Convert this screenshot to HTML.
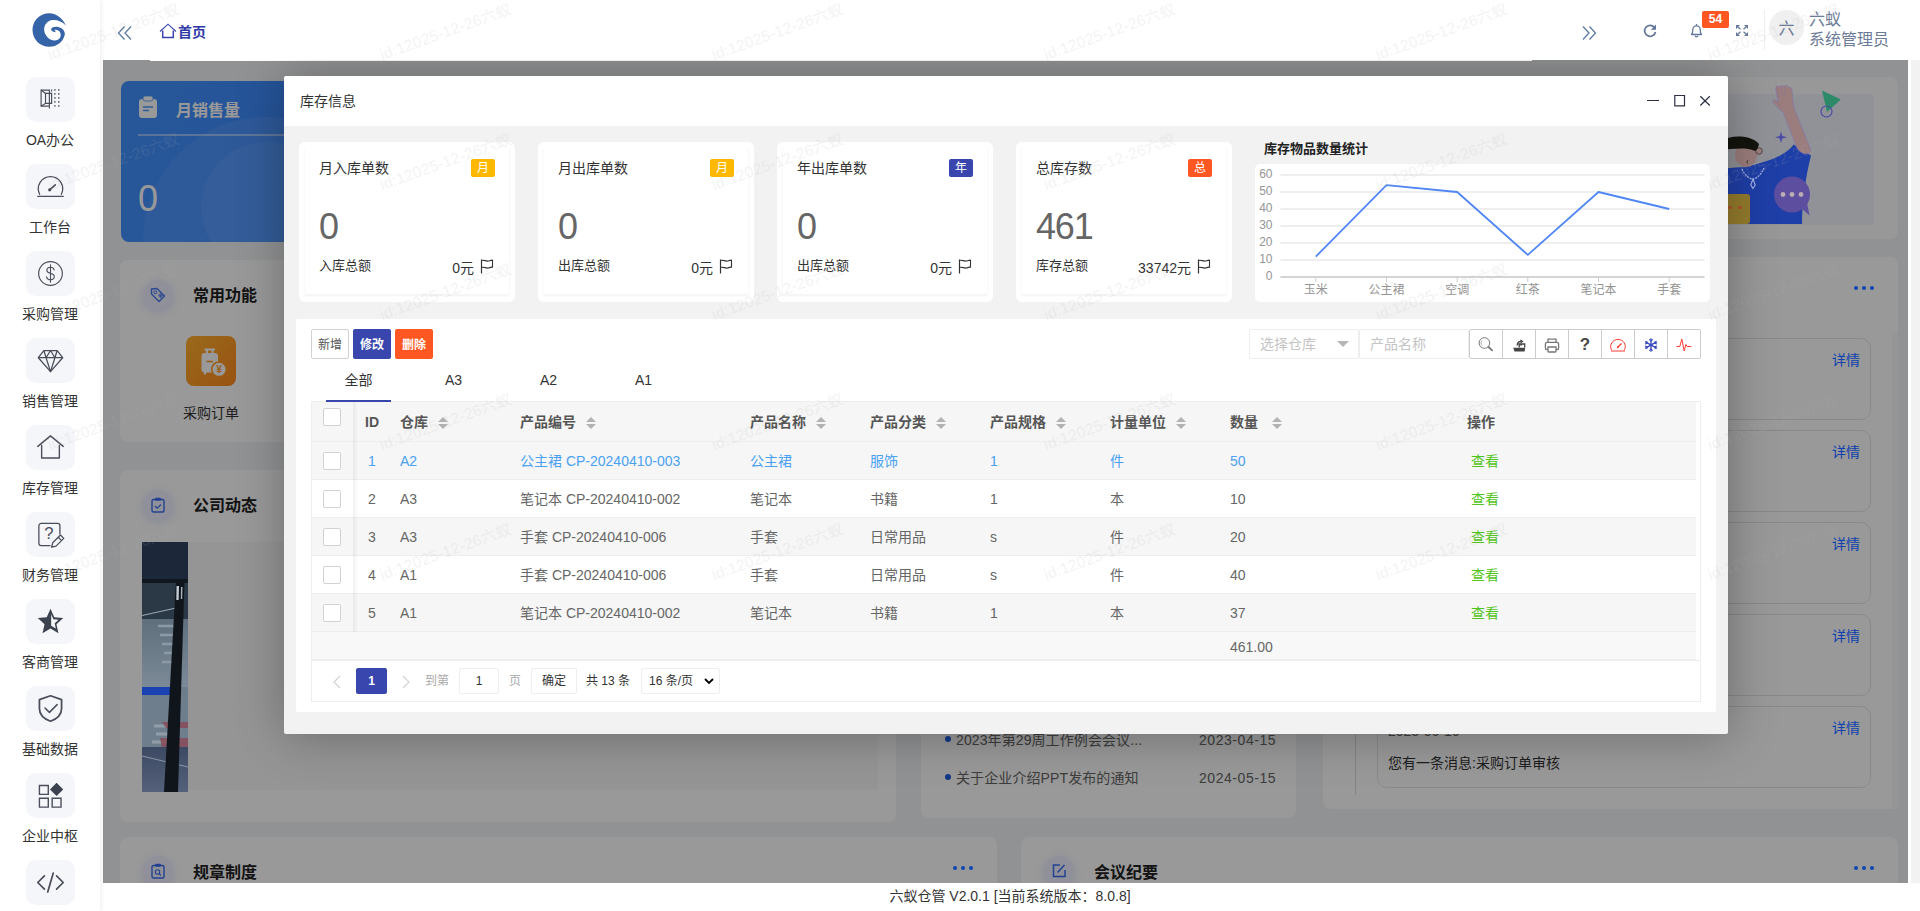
<!DOCTYPE html>
<html lang="zh-CN">
<head>
<meta charset="utf-8">
<title>六蚁仓管</title>
<style>
*{box-sizing:border-box;margin:0;padding:0}
html,body{width:1920px;height:911px;overflow:hidden;background:#fff}
body{font-family:"Liberation Sans","Noto Sans CJK SC",sans-serif;font-size:14px;color:#333;position:relative}
.abs{position:absolute}
/* ---------- sidebar ---------- */
#side{position:absolute;left:0;top:0;width:100px;height:911px;background:#fff;z-index:30;box-shadow:1px 0 5px rgba(0,0,0,.08)}
#logo{position:absolute;left:32px;top:13px;width:36px;height:36px}
.mi{position:absolute;left:0;width:100px;height:87px}
.mi .box{position:absolute;left:26px;top:0;width:49px;height:45px;border-radius:10px;background:#f5f6fa}
.mi .box svg{position:absolute;left:9px;top:7px;width:31px;height:31px}
.mi .lb{position:absolute;left:0;top:53px;width:100px;text-align:center;font-size:14px;line-height:20px;color:#333}
/* ---------- header ---------- */
#head{position:absolute;left:100px;top:0;width:1820px;height:60px;background:#fff;z-index:20}
/* ---------- content ---------- */
#main{position:absolute;left:103px;top:60px;width:1805px;height:823px;background:#f2f3f5;overflow:hidden;z-index:1}
#shade{position:absolute;left:103px;top:60px;width:1805px;height:823px;background:rgba(0,0,0,.4);z-index:5}
#sbar{position:absolute;left:1911px;top:60px;width:9px;height:823px;background:#f2f2f2;z-index:6}
#foot{position:absolute;left:100px;top:883px;width:1820px;height:28px;background:#fff;z-index:25;text-align:center;font-size:14px;line-height:26px;color:#333}
.card{position:absolute;background:#fff;border-radius:8px}
.ctitle{position:absolute;font-size:16px;font-weight:bold;color:#222;line-height:24px}
.cico{position:absolute;width:30px;height:30px;border-radius:50%;background:#eef1ff;box-shadow:0 2px 8px rgba(150,170,255,.3)}
.dots{position:absolute;color:#1d4fd8;font-size:22px;font-weight:bold;letter-spacing:1px;line-height:10px}
/* ---------- modal ---------- */
#modal{position:absolute;left:284px;top:76px;width:1444px;height:658px;background:#f2f2f2;z-index:10;box-shadow:1px 1px 50px rgba(0,0,0,.3);border-radius:2px;overflow:hidden}
#mtitle{position:absolute;left:0;top:0;width:1444px;height:50px;background:#fff;border-radius:2px 2px 0 0}
#mtitle .t{position:absolute;left:16px;top:0;line-height:50px;font-size:14px;color:#333}

/* modal content */
.wbtn{position:absolute;top:16px;width:16px;height:16px}
.sc{position:absolute;top:66px;width:216px;height:160px;background:#fff;border-radius:6px}
.sc .in{position:absolute;left:5px;top:5px;right:5px;bottom:7px;border:1px solid #fafafa;border-top-color:#fefefe;border-bottom-color:#f6f6f6;border-radius:3px;box-shadow:0 1px 2px rgba(0,0,0,.05)}
.sc .tt{position:absolute;left:20px;top:16px;font-size:14px;line-height:20px;color:#333}
.sc .bd{position:absolute;left:172px;top:17px;width:24px;height:18px;border-radius:2px;color:#fff;font-size:12px;line-height:18px;text-align:center}
.sc .num{position:absolute;left:20px;top:65px;font-size:36px;line-height:40px;color:#666;letter-spacing:-1.200px}
.sc .sub{position:absolute;left:20px;top:114px;font-size:13px;line-height:20px;color:#333}
.sc .amt{position:absolute;right:41px;top:116px;font-size:14px;line-height:20px;color:#333}
.sc .flag{position:absolute;left:181px;top:117px;width:14px;height:15px}
#panel{position:absolute;left:12px;top:243px;width:1420px;height:393px;background:#fff;border-radius:2px}
.btn{position:absolute;top:10px;height:30px;width:38px;border-radius:2px;font-size:12px;line-height:32px;text-align:center;color:#fff}
.tab{position:absolute;top:47px;width:65px;height:34px;font-size:14px;line-height:28px;text-align:center;color:#333}
#tbl{position:absolute;left:15px;top:82px;width:1390px;height:301px;border:1px solid #eee}
.tr{position:absolute;left:0;width:1384px;height:38px;border-bottom:1px solid #eee;font-size:14px;line-height:39px;color:#666;white-space:nowrap}
.tr.g{background:#f6f6f6}
.tr.sel{color:#4aa1f3}
.tr span{position:absolute;top:0}
.tr .ck{position:absolute;left:11px;top:10px;width:18px;height:18px;border:1px solid #d2d2d2;border-radius:2px;background:#fff}
.tr .op{color:#52c41a;font-weight:normal}
.th{font-weight:bold;color:#555}
.sort{position:absolute;top:15px;width:10px;height:12px}
.sort:before{content:"";position:absolute;left:0;top:0;border:5px solid transparent;border-bottom-color:#b2b2b2;border-top:0}
.sort:after{content:"";position:absolute;left:0;top:7px;border:5px solid transparent;border-top-color:#b2b2b2;border-bottom:0}
.tool{position:absolute;top:10px;left:1173px;height:30px;width:232px;border:1px solid #ccc;border-radius:2px;background:#fff}
.tool i{position:absolute;top:0;width:1px;height:28px;background:#ccc}
.tool svg{position:absolute;top:7px;width:16px;height:16px}
.pg{position:absolute;top:266px;font-size:12px;line-height:26px;height:26px;color:#333}

.dots{width:20px;height:4px}
.dots i{position:absolute;top:0;width:4px;height:4px;border-radius:50%;background:#2a70f5}
.dots i:nth-child(2){left:8px}.dots i:nth-child(3){left:16px}
.it{position:absolute;left:54px;width:494px;height:82px;border:1px solid #e4e4e4;border-radius:10px;font-size:14px;line-height:20px}
.it b{position:absolute;right:9px;top:11px;font-weight:normal;color:#2a5ff0;font-size:14px}

#wmk{position:absolute;left:0;top:0;width:1920px;height:911px;overflow:hidden;z-index:100;pointer-events:none}
.wm{position:absolute;font-size:15.500px;letter-spacing:.2px;line-height:20px;height:20px;white-space:nowrap;color:#b0b0b0;opacity:.14;transform-origin:0 100%;transform:rotate(-19.800deg)}

#over{position:absolute;left:0;top:0;width:1908px;height:883px;z-index:6;overflow:hidden}
.ov{position:absolute;font-size:14px;line-height:20px;color:#0d40ae}
.od i{background:#0d45b5}
</style>
</head>
<body>
<div id="side">
<svg id="logo" viewBox="0 0 36 36"><path d="M33.800 12.400C31 6 25 .2 17.300 .2A16.800 16.800 0 0 0 .5 17A16.800 16.800 0 0 0 17.300 33.800C25 33.800 31 29 32.800 21.800C33.200 18.500 30.500 15 27 14.300C24 13.300 20 13.800 19.100 16C18.800 17.500 20.500 19 23.400 19.300C23.800 18.200 23 17.200 22.200 17C24 16.300 27 17 28.200 19.500C29.500 22.500 28.500 25 26.200 26.500C23 28.300 18.500 27.500 15.700 24.500C13 21.500 11.500 18 12.300 14.500C13.300 10.500 16.500 7.500 20.300 7.100C25 6.500 30 8.500 33.800 12.400Z" fill="#3565a8"/></svg>
<div class="mi" style="top:77px"><div class="box"><svg viewBox="0 0 28 28"><g fill="none" stroke="#4a4e5a" stroke-width="1.05"><path d="M5.500 5.500h7.500v14.500H5.500z"/><path d="M9.500 8.500h5.500v9H9.500z"/><path d="M5.500 5.500l4 3M5.500 20l4-2.500"/><path d="M18 4.500v18M21.500 4.500v18" stroke-dasharray="1.700 1.900"/><path d="M13 20.500v2.500M15 5v3.500" stroke-dasharray="1.700 1.900"/></g></svg></div><div class="lb">OA办公</div></div>
<div class="mi" style="top:164px"><div class="box"><svg viewBox="0 0 28 28"><g fill="none" stroke="#4a4e5a" stroke-width="1.15" stroke-linecap="round"><path d="M4.200 21a11 11 0 1 1 19.600 0"/><path d="M2.500 23h23"/><path d="M13.300 17l5-4.500" stroke-width="1.55"/><circle cx="13.300" cy="17" r=".900" fill="#4a4e5a"/></g></svg></div><div class="lb">工作台</div></div>
<div class="mi" style="top:251px"><div class="box"><svg viewBox="0 0 28 28"><g fill="none" stroke="#4a4e5a" stroke-width="1.05" stroke-linecap="round"><circle cx="14" cy="14" r="10.700"/><path d="M17.300 10.800c-.4-1.700-1.700-2.500-3.300-2.500-1.900 0-3.300 1.100-3.300 2.800 0 1.600 1.300 2.300 3.300 2.800 2 .5 3.400 1.200 3.400 2.900 0 1.700-1.500 2.900-3.400 2.900-1.800 0-3.200-.9-3.600-2.700M14 6.200v15.600" stroke-width="1"/></g></svg></div><div class="lb">采购管理</div></div>
<div class="mi" style="top:338px"><div class="box"><svg viewBox="0 0 28 28"><g fill="none" stroke="#4a4e5a" stroke-width="1.15" stroke-linejoin="round"><path d="M8 5h12l5 6.5L14 24 3 11.5z"/><path d="M3 11.5h22M10 11.5L14 24l4-12.5M8 5l2 6.5L14 5l4 6.5 2-6.5"/></g></svg></div><div class="lb">销售管理</div></div>
<div class="mi" style="top:425px"><div class="box"><svg viewBox="0 0 28 28"><g fill="none" stroke="#4a4e5a" stroke-width="1.25" stroke-linecap="round" stroke-linejoin="round"><path d="M2.5 13L14 3.5 25.5 13"/><path d="M6 12v11.5h16V12"/></g></svg></div><div class="lb">库存管理</div></div>
<div class="mi" style="top:512px"><div class="box"><svg viewBox="0 0 28 28"><g fill="none" stroke="#4a4e5a" stroke-width="1.15" stroke-linejoin="round"><path d="M14 24H5.5a2 2 0 0 1-2-2V6a2 2 0 0 1 2-2h15a2 2 0 0 1 2 2v8"/><path d="M15 25.5l1-4 7-7 3 3-7 7zM21 16.5l3 3"/></g><text x="12.5" y="18.5" font-size="15" text-anchor="middle" fill="#4a4e5a" font-family="Liberation Sans,sans-serif">?</text></svg></div><div class="lb">财务管理</div></div>
<div class="mi" style="top:599px"><div class="box"><svg viewBox="0 0 28 28"><path d="M14 2.5l3.4 7.6 8.1.8-6.1 5.5 1.8 8.1L14 20.3l-7.2 4.2 1.8-8.1-6.100-5.500 8.100-.8z" fill="#3d4250"/><path d="M14.600 7.500l2 4.400 4.700.5-3.500 3.200 1 4.700-4.200-2.500z" fill="#f5f6fa"/></svg></div><div class="lb">客商管理</div></div>
<div class="mi" style="top:686px"><div class="box"><svg viewBox="0 0 28 28"><g fill="none" stroke="#4a4e5a" stroke-width="1.35" stroke-linecap="round" stroke-linejoin="round"><path d="M14 2.500l10 3.500v8c0 6-4.500 9.500-10 11.500C8.500 23.500 4 20 4 14V6z" stroke-width="1.600"/><path d="M9 13.500l4 4 7-7"/></g></svg></div><div class="lb">基础数据</div></div>
<div class="mi" style="top:773px"><div class="box"><svg viewBox="0 0 28 28"><g fill="none" stroke="#4a4e5a" stroke-width="1.25"><path d="M4 5h8v8H4zM4 16.500h8v8H4zM15.500 16.500h8v8h-8z"/></g><path d="M19.500 2.500l6 6-6 6-6-6z" fill="#3d4250"/></svg></div><div class="lb">企业中枢</div></div>
<div class="mi" style="top:860px"><div class="box"><svg viewBox="0 0 28 28"><g fill="none" stroke="#4a4e5a" stroke-width="1.55" stroke-linecap="round" stroke-linejoin="round"><path d="M8.500 8L2.500 14l6 6M19.500 8l6 6-6 6M16.500 5.500l-5 17"/></g></svg></div></div>
</div>
<div id="head">
<svg class="abs" style="left:17px;top:25px" width="16" height="16" viewBox="0 0 16 16"><path d="M7.500 1.500L1.500 8l6 6.500M14 1.500L8 8l6 6.500" fill="none" stroke="#5d7ba3" stroke-width="1.300"/></svg>
<svg class="abs" style="left:59px;top:23px" width="18" height="16" viewBox="0 0 18 16"><path d="M1 8.500L9 1.200l8 7.300" fill="none" stroke="#3a43b0" stroke-width="1.100"/><path d="M3.700 7.500v7h10.600v-7" fill="none" stroke="#3a43b0" stroke-width="1.500"/></svg>
<div class="abs" style="left:78px;top:22px;font-size:14px;line-height:20px;font-weight:bold;color:#2f3aa6">首页</div>
<svg class="abs" style="left:1481px;top:25px" width="16" height="16" viewBox="0 0 16 16"><path d="M2 1.500L8 8l-6 6.500M8.500 1.500l6 6.500-6 6.500" fill="none" stroke="#5d7ba3" stroke-width="1.300"/></svg>
<svg class="abs" style="left:1543px;top:24px" width="14" height="14" viewBox="0 0 14 14"><path d="M11.300 3.200A5.500 5.500 0 1 0 12.500 8" fill="none" stroke="#63779a" stroke-width="1.700"/><path d="M13 0.500v5.200H7.800z" fill="#63779a"/></svg>
<svg class="abs" style="left:1589px;top:23px" width="15" height="15" viewBox="0 0 15 15"><path d="M2.500 11.500c1.200-1 1.300-2.500 1.300-5a3.700 3.700 0 0 1 7.400 0c0 2.500.1 4 1.300 5z" fill="none" stroke="#63779a" stroke-width="1.300" stroke-linejoin="round"/><path d="M6 12.800a1.600 1.600 0 0 0 3 0" fill="none" stroke="#63779a" stroke-width="1.200"/><path d="M7.500 1v1.500" stroke="#63779a" stroke-width="1.300"/></svg>
<div class="abs" style="left:1602px;top:11px;width:27px;height:17px;background:#ff5722;border-radius:2px;color:#fff;font-size:12px;font-weight:bold;line-height:17px;text-align:center">54</div>
<svg class="abs" style="left:1636px;top:25px" width="12" height="11" viewBox="0 0 12 11"><g fill="#63779a"><path d="M0 0h4L0 4zM12 0H8l4 4zM0 11h4L0 7zM12 11H8l4-4z"/></g><path d="M2 2l2.500 2.200M10 2L7.500 4.200M2 9l2.500-2.200M10 9L7.500 6.800" stroke="#63779a" stroke-width="1.200"/></svg>
<div class="abs" style="left:1664px;top:10px;width:1px;height:40px;background:#eee"></div>
<div class="abs" style="left:1669px;top:10px;width:35px;height:35px;border-radius:50%;background:#f0f0f0;color:#6b7a99;font-size:16px;line-height:37px;text-align:center">六</div>
<div class="abs" style="left:1709px;top:10px;font-size:16px;line-height:20px;color:#6c7b98">六蚁<br>系统管理员</div>
</div>
<div id="main"><div class="abs" style="left:-103px;top:-60px;width:1920px;height:911px">
<!-- blue card -->
<div class="card" style="left:121px;top:81px;width:380px;height:161px;background:linear-gradient(100deg,#4290ff 0%,#3f8cff 45%,#4a8cf0 100%);overflow:hidden">
 <div class="abs" style="left:22px;top:36px;width:246px;height:246px;border-radius:50%;background:rgba(255,255,255,.07)"></div><div class="abs" style="left:80px;top:61px;width:130px;height:130px;border-radius:50%;background:rgba(255,255,255,.06)"></div>
 <svg class="abs" style="left:17px;top:14px" width="20" height="24" viewBox="0 0 20 24"><rect x="1" y="4" width="18" height="19" rx="3" fill="#fff"/><rect x="5" y="1" width="10" height="5" rx="2" fill="#fff" stroke="#4a9bff" stroke-width=".800"/><path d="M5 12h10M5 15.500h6" stroke="#4a9bff" stroke-width="1.500"/></svg>
 <div class="abs" style="left:55px;top:17px;font-size:16px;font-weight:bold;line-height:26px;color:#fff">月销售量</div>
 <div class="abs" style="left:17px;top:53px;width:360px;height:2px;background:rgba(255,255,255,.45)"></div>
 <div class="abs" style="left:17px;top:98px;font-size:36px;line-height:40px;color:#fff">0</div>
</div>
<!-- 常用功能 -->
<div class="card" style="left:120px;top:260px;width:776px;height:182px">
 <div class="cico" style="left:23px;top:20px"><svg class="abs" style="left:7px;top:7px" width="16" height="16" viewBox="0 0 16 16"><path d="M1.500 2l5.500-.5 7.500 7.500-5.500 5.500L1.500 7z" fill="none" stroke="#4a78f0" stroke-width="1.400" stroke-linejoin="round"/><circle cx="5.300" cy="5.300" r="1.500" fill="none" stroke="#4a78f0" stroke-width="1"/><path d="M8 8.500l2.500-2.500 2.700 2.700-2.500 2.500z" fill="#6f93f5"/></svg></div>
 <div class="ctitle" style="left:73px;top:24px">常用功能</div>
 <div class="abs" style="left:66px;top:76px;width:50px;height:50px;border-radius:8px;background:linear-gradient(135deg,#ffb02e,#ff8a1f)"><svg class="abs" style="left:13px;top:10px" width="30" height="32" viewBox="0 0 30 32"><rect x="2.500" y="7" width="16.500" height="19.500" rx="3" fill="#fff"/><path d="M5.500 3.500h10.500M8 3.500v4M13.500 3.500v4" stroke="#fff" stroke-width="2" fill="none"/><path d="M7.500 15.500h6.500" stroke="#ff9a26" stroke-width="1.600"/><path d="M6 26v2.500" stroke="#fff" stroke-width="2.200"/><circle cx="20" cy="23.300" r="7.300" fill="#fff" stroke="#ff9a26" stroke-width="1.600"/><text x="20" y="27" font-size="10" font-weight="bold" text-anchor="middle" fill="#ff9a26" font-family="Liberation Sans,sans-serif">¥</text></svg></div>
 <div class="abs" style="left:41px;top:143px;width:100px;text-align:center;font-size:14px;line-height:20px;color:#333">采购订单</div>
</div>
<!-- 公司动态 -->
<div class="card" style="left:120px;top:470px;width:776px;height:352px">
 <div class="cico" style="left:23px;top:20px"><svg class="abs" style="left:8px;top:7px" width="14" height="16" viewBox="0 0 14 16"><rect x="1" y="2.500" width="12" height="12.500" rx="1.500" fill="none" stroke="#3b6df0" stroke-width="1.400"/><rect x="4" y="0.800" width="6" height="3" rx="1" fill="#3b6df0"/><path d="M4 9l2.200 2.200L10 7.500" fill="none" stroke="#3b6df0" stroke-width="1.200"/></svg></div>
 <div class="ctitle" style="left:73px;top:24px">公司动态</div>
 <div class="abs" style="left:22px;top:72px;width:736px;height:248px;background:#f8f8f8"></div>
 </div>
<!-- 规章制度 -->
<div class="card" style="left:120px;top:837px;width:877px;height:120px">
 <div class="cico" style="left:23px;top:19px"><svg class="abs" style="left:8px;top:7px" width="14" height="16" viewBox="0 0 14 16"><rect x="1" y="2.500" width="12" height="12.500" rx="1.500" fill="none" stroke="#3b6df0" stroke-width="1.400"/><rect x="4" y="0.800" width="6" height="3" rx="1" fill="#3b6df0"/><circle cx="6.500" cy="9" r="2.200" fill="none" stroke="#3b6df0" stroke-width="1.100"/><path d="M8 10.500l2 2" stroke="#3b6df0" stroke-width="1.100"/></svg></div>
 <div class="ctitle" style="left:73px;top:24px">规章制度</div>
 
</div>
<!-- 会议纪要 -->
<div class="card" style="left:1021px;top:837px;width:877px;height:120px">
 <div class="cico" style="left:23px;top:19px"><svg class="abs" style="left:7px;top:7px" width="16" height="16" viewBox="0 0 16 16"><path d="M9 2H2.500v11.500H14V7" fill="none" stroke="#3b6df0" stroke-width="1.500"/><path d="M6.500 9.500l7-7.500" stroke="#3b6df0" stroke-width="1.500"/></svg></div>
 <div class="ctitle" style="left:73px;top:24px">会议纪要</div>
 
</div>
<!-- middle list card -->
<div class="card" style="left:921px;top:470px;width:375px;height:348px;font-size:14px;color:#666;line-height:22px;letter-spacing:.1px">
 <i class="abs" style="left:24px;top:266px;width:6px;height:6px;border-radius:50%;background:#1f5fe0"></i>
 <div class="abs" style="left:35px;top:259px;white-space:nowrap">2023年第29周工作例会会议...</div><div class="abs" style="left:278px;top:259px;letter-spacing:.55px">2023-04-15</div>
 <i class="abs" style="left:24px;top:304px;width:6px;height:6px;border-radius:50%;background:#1f5fe0"></i>
 <div class="abs" style="left:35px;top:297px;white-space:nowrap">关于企业介绍PPT发布的通知</div><div class="abs" style="left:278px;top:297px;letter-spacing:.55px">2024-05-15</div>
</div>
<!-- right top illustration card -->
<div class="card" style="left:1323px;top:77px;width:575px;height:162px;background:#fdfdfd">
 <div class="abs" style="left:20px;top:17px;width:531px;height:131px;background:#f1f3fc;border-radius:4px"></div>
 
</div>
<!-- right list card -->
<div class="card" style="left:1323px;top:257px;width:575px;height:552px">
 
 <div class="abs" style="left:32px;top:70px;width:1px;height:468px;background:#dcdcdc"></div>
 <div class="abs" style="left:569px;top:75px;width:6px;height:477px;background:#f9f9f9"></div>
 <div class="it" style="top:81px"></div>
 <div class="it" style="top:173px"></div>
 <div class="it" style="top:265px"></div>
 <div class="it" style="top:357px"></div>
 <div class="it" style="top:449px"><span class="abs" style="left:10px;top:14px;color:#666">2023-06-16</span><span class="abs" style="left:10px;top:46px;color:#333">您有一条消息:采购订单审核</span></div>
</div>
</div></div>
<div id="shade"></div>
<div class="abs" style="left:150px;top:60px;width:1382px;height:1px;background:#fff;z-index:6"></div>
<div id="sbar"></div>
<div id="over">
<div class="ov" style="left:1832px;top:350px">详情</div><div class="ov" style="left:1832px;top:442px">详情</div><div class="ov" style="left:1832px;top:534px">详情</div><div class="ov" style="left:1832px;top:626px">详情</div><div class="ov" style="left:1832px;top:718px">详情</div>
<div class="dots od" style="left:1854px;top:286px"><i></i><i></i><i></i></div>
<div class="dots od" style="left:953px;top:866px"><i></i><i></i><i></i></div>
<div class="dots od" style="left:1854px;top:866px"><i></i><i></i><i></i></div>
<svg class="abs" style="left:142px;top:542px" width="46" height="250" viewBox="0 0 46 250">
<defs><linearGradient id="pg1" x1="0" y1="0" x2="0" y2="1"><stop offset="0" stop-color="#5f6f7c"/><stop offset="1" stop-color="#7b8a96"/></linearGradient><linearGradient id="pg2" x1="0" y1="0" x2="0" y2="1"><stop offset="0" stop-color="#3c4962"/><stop offset="1" stop-color="#55617b"/></linearGradient></defs>
<rect width="46" height="250" fill="#6d7c8a"/>
<rect width="46" height="38" fill="#1c2839"/>
<rect y="37" width="46" height="4" fill="#11171f"/>
<rect y="41" width="46" height="36" fill="#2b3846"/>
<path d="M0 73.500L34 66" stroke="#9aa7b0" stroke-width="1.200"/>
<rect y="77" width="46" height="68" fill="url(#pg1)"/>
<path d="M16 84h16M18 93h14M20 102h12M22 111h10M20 120h12" stroke="#8d9aa6" stroke-width="2.500"/>
<rect y="145" width="34" height="8" fill="#1a42b0"/>
<rect y="153" width="46" height="52" fill="#6f7e8c"/>
<path d="M12 184h22M14 192h20M10 200h22" stroke="#909da8" stroke-width="3"/>
<path d="M20 180h26v6H24zM18 196h28v10H20z" fill="#8a4755" opacity=".8"/>
<rect y="205" width="46" height="45" fill="url(#pg2)"/>
<path d="M0 214l46 11" stroke="#8a96a6" stroke-width="1"/>
<path d="M34 38h8.500L36 250H22z" fill="#10151c"/>
<path d="M34.500 44l2.500 0-.3 14-2.400 0z" fill="#c3cbd2"/><path d="M39 45h1.500l-.3 12h-1.400z" fill="#aab4bd"/>
</svg>
<svg class="abs" style="left:1703px;top:77px" width="190" height="162" viewBox="1703 77 190 162">
  <path d="M1720 224V169c14-2 28-1 40-6 14-4 28-10 33.500-18.500l17.500 11c-5 20-9 45-9 68.500z" fill="#1f3fa8"/>
  <path d="M1797 148l-14-36c-3-2-9-8-10.500-11.500 1.500-1.500 4.500-.5 6 1.500-1.500-6-3.500-12-2.500-15 1-2 3-1 4 1 0-2.500 3-3.500 4-1 1-2.500 4-2 4.500.5 1.500-1 3.500.5 3.500 2.500.5 6 1 12 2 18l17 42c-1 5-9 6-14-2z" fill="#9b7d7d" stroke="#7a70b8" stroke-width=".500"/>
  <path d="M1777.500 88l1.500 9M1781 86.500l1.500 9.500M1784.500 86.500l1 9M1776 103c2 .5 4 2 5 3.500" fill="none" stroke="#84709a" stroke-width=".500"/>
  <ellipse cx="1746" cy="155" rx="11" ry="12" fill="#9b7d7d"/><circle cx="1759" cy="151" r="3.300" fill="#9b7d7d" stroke="#333" stroke-width=".700"/>
  <path d="M1720 141c12-7 32-6 39 3-1 4-2 6-4 7-9-4-22-2-35-1z" fill="#14140e"/>
  <path d="M1748 160c-1 1-1.500 2.500-.5 3.500" fill="none" stroke="#222" stroke-width=".800"/>
  <path d="M1742 169c3 7 8 10 11 10s8-4 11-11" fill="none" stroke="#a9b6e6" stroke-width="1.300" stroke-dasharray="2 1"/><path d="M1753 179l-2.200 6 2.200 3.500 2.200-3.500z" fill="none" stroke="#a9b6e6" stroke-width="1.100"/>
  <circle cx="1792" cy="194.500" r="18" fill="#5d4e9f"/><path d="M1800 207l9.500 8.500-3-15z" fill="#5d4e9f"/><circle cx="1783" cy="194.500" r="2.400" fill="#b9aeb4"/><circle cx="1792" cy="194.500" r="2.400" fill="#b9aeb4"/><circle cx="1801" cy="194.500" r="2.400" fill="#b9aeb4"/>
  <rect x="1718" y="194" width="32" height="30" rx="3" fill="#957c2d"/><circle cx="1730" cy="207.500" r="1.800" fill="#b4502c"/><circle cx="1740" cy="207.500" r="1.800" fill="#b4502c"/>
  <path d="M1822 90.500l18.700 9-13.700 12.500z" fill="#2c8a68"/><circle cx="1826.500" cy="111.500" r="5.500" fill="none" stroke="#4b4ba8" stroke-width="1.200"/>
  <path d="M1781 131.500l1.300 4.500 4.700 1.300-4.700 1.300-1.300 4.500-1.300-4.500-4.700-1.300 4.700-1.300z" fill="#4b4ba8"/>
 </svg>
</div>
<div id="modal">
  <div id="mtitle"><span class="t">库存信息</span><svg class="wbtn" style="left:1361px" viewBox="0 0 16 16"><path d="M2 8.500h12" stroke="#2d3045" stroke-width="1.200"/></svg>
<svg class="wbtn" style="left:1387px" viewBox="0 0 16 16"><path d="M3.800 3.500h9.700v10.300H3.800z" fill="none" stroke="#2d3045" stroke-width="1.200"/></svg>
<svg class="wbtn" style="left:1413px" viewBox="0 0 16 16"><path d="M3.300 4.200l9.500 9.300M12.800 4.200L3.300 13.500" stroke="#2d3045" stroke-width="1.200"/></svg></div>
<div class="sc" style="left:15px"><div class="in"></div><div class="tt">月入库单数</div><div class="bd" style="background:#ffb800">月</div><div class="num">0</div><div class="sub">入库总额</div><div class="amt">0元</div><svg class="flag" viewBox="0 0 14 15"><path d="M1.500 0.500v14" stroke="#333" stroke-width="1.200" fill="none"/><path d="M1.500 1.500c2.500-1.200 4.500 1.200 7 .5 1.500-.4 3-1 4-.8v7c-1.500-.3-2.500.4-4 .8-2.500.7-4.500-1.700-7-.5" stroke="#333" stroke-width="1.100" fill="none"/></svg></div><div class="sc" style="left:254px"><div class="in"></div><div class="tt">月出库单数</div><div class="bd" style="background:#ffb800">月</div><div class="num">0</div><div class="sub">出库总额</div><div class="amt">0元</div><svg class="flag" viewBox="0 0 14 15"><path d="M1.500 0.500v14" stroke="#333" stroke-width="1.200" fill="none"/><path d="M1.500 1.500c2.500-1.200 4.500 1.200 7 .5 1.500-.4 3-1 4-.8v7c-1.500-.3-2.500.4-4 .8-2.500.7-4.500-1.700-7-.5" stroke="#333" stroke-width="1.100" fill="none"/></svg></div><div class="sc" style="left:493px"><div class="in"></div><div class="tt">年出库单数</div><div class="bd" style="background:#3846ae">年</div><div class="num">0</div><div class="sub">出库总额</div><div class="amt">0元</div><svg class="flag" viewBox="0 0 14 15"><path d="M1.500 0.500v14" stroke="#333" stroke-width="1.200" fill="none"/><path d="M1.500 1.500c2.500-1.200 4.500 1.200 7 .5 1.500-.4 3-1 4-.8v7c-1.500-.3-2.500.4-4 .8-2.500.7-4.500-1.700-7-.5" stroke="#333" stroke-width="1.100" fill="none"/></svg></div><div class="sc" style="left:732px"><div class="in"></div><div class="tt">总库存数</div><div class="bd" style="background:#ff5722">总</div><div class="num">461</div><div class="sub">库存总额</div><div class="amt">33742元</div><svg class="flag" viewBox="0 0 14 15"><path d="M1.500 0.500v14" stroke="#333" stroke-width="1.200" fill="none"/><path d="M1.500 1.500c2.500-1.200 4.500 1.200 7 .5 1.500-.4 3-1 4-.8v7c-1.500-.3-2.500.4-4 .8-2.500.7-4.500-1.700-7-.5" stroke="#333" stroke-width="1.100" fill="none"/></svg></div>
<div class="abs" style="left:980px;top:64px;font-size:13px;font-weight:bold;line-height:18px;color:#222">库存物品数量统计</div>
<div class="abs" style="left:971px;top:88px;width:455px;height:138px;background:#fff;border-radius:5px"><svg width="455" height="138" viewBox="0 -0.500 455 138" style="font-family:'Liberation Sans','Noto Sans CJK SC',sans-serif;font-size:12px;fill:#959595"><path d="M25.5 112.5H449.5" stroke="#d4d4d4" stroke-width="1.800"/><text x="17.5" y="115.8" text-anchor="end">0</text><path d="M25.5 95.5H449.5" stroke="#e8e8e8" stroke-width="1.700"/><text x="17.5" y="98.8" text-anchor="end">10</text><path d="M25.5 78.5H449.5" stroke="#e8e8e8" stroke-width="1.700"/><text x="17.5" y="81.8" text-anchor="end">20</text><path d="M25.5 61.5H449.5" stroke="#e8e8e8" stroke-width="1.700"/><text x="17.5" y="64.8" text-anchor="end">30</text><path d="M25.5 44.5H449.5" stroke="#e8e8e8" stroke-width="1.700"/><text x="17.5" y="47.8" text-anchor="end">40</text><path d="M25.5 27.5H449.5" stroke="#e8e8e8" stroke-width="1.700"/><text x="17.5" y="30.8" text-anchor="end">50</text><path d="M25.5 10.5H449.5" stroke="#e8e8e8" stroke-width="1.700"/><text x="17.5" y="13.8" text-anchor="end">60</text><path d="M60.8 112.5v5" stroke="#ccc" stroke-width="1"/><text x="60.8" y="129.0" text-anchor="middle">玉米</text><path d="M131.5 112.5v5" stroke="#ccc" stroke-width="1"/><text x="131.5" y="129.0" text-anchor="middle">公主裙</text><path d="M202.2 112.5v5" stroke="#ccc" stroke-width="1"/><text x="202.2" y="129.0" text-anchor="middle">空调</text><path d="M272.8 112.5v5" stroke="#ccc" stroke-width="1"/><text x="272.8" y="129.0" text-anchor="middle">红茶</text><path d="M343.5 112.5v5" stroke="#ccc" stroke-width="1"/><text x="343.5" y="129.0" text-anchor="middle">笔记本</text><path d="M414.2 112.5v5" stroke="#ccc" stroke-width="1"/><text x="414.2" y="129.0" text-anchor="middle">手套</text><polyline points="60.8,92.1 131.5,20.7 202.2,27.5 272.8,90.4 343.5,27.5 414.2,44.5" fill="none" stroke="#5087f5" stroke-width="1.800" stroke-linejoin="round"/></svg></div>
<div id="panel">
<div class="btn" style="left:15px;border:1px solid #d2d2d2;background:#fff;color:#555;line-height:30px">新增</div>
<div class="btn" style="left:57px;background:#3846ae;font-weight:bold">修改</div>
<div class="btn" style="left:99px;background:#ff5722;font-weight:bold">删除</div>
<div class="abs" style="left:953px;top:10px;width:110px;height:30px;border:1px solid #eee;border-radius:2px;font-size:14px;line-height:28px;color:#c4c4c4;padding-left:10px">选择仓库<i class="abs" style="left:87px;top:11px;border:6px solid transparent;border-top-color:#b5b5b5;border-bottom:0"></i></div>
<div class="abs" style="left:1063px;top:10px;width:110px;height:30px;border:1px solid #eee;border-radius:2px;font-size:14px;line-height:28px;color:#c4c4c4;padding-left:10px">产品名称</div>
<div class="tool"><i style="left:32px"></i><i style="left:65px"></i><i style="left:98px"></i><i style="left:131px"></i><i style="left:164px"></i><i style="left:197px"></i>
<svg style="left:8px" viewBox="0 0 16 16"><circle cx="6.400" cy="6" r="5.300" fill="none" stroke="#777" stroke-width="1"/><path d="M4.200 3.500a3.300 3.300 0 0 0 0 5" fill="none" stroke="#999" stroke-width=".800"/><path d="M10.500 10l3.600 3.300" stroke="#777" stroke-width="1.800" stroke-linecap="round"/></svg>
<svg style="left:41px;top:8px" viewBox="0 0 16 16"><path d="M2.200 9.700h12l-.600 3.800H3.500z" fill="#444"/><path d="M8.200 9.500V6h5.500v3.500" fill="none" stroke="#444" stroke-width="1.300"/><path d="M8.200 6.800h3" stroke="#444" stroke-width="1.300"/><path d="M6.300 7.500c0-2.500 1.500-4 4-4.200" fill="none" stroke="#444" stroke-width="1.500"/><path d="M9.500 1.200l3 2.200-3 2.200z" fill="#444"/></svg>
<svg style="left:74px" viewBox="0 0 16 16"><path d="M4 5.500V2.200h8v3.300M4 12.500H2.600a1.200 1.200 0 0 1-1.200-1.200V7a1.600 1.600 0 0 1 1.600-1.600h10A1.600 1.600 0 0 1 14.600 7v4.300a1.200 1.200 0 0 1-1.200 1.200H12M4 10h8v4.300a.7.7 0 0 1-.7.700H4.700a.7.700 0 0 1-.7-.7z" fill="none" stroke="#777" stroke-width="1.300"/></svg>
<div class="abs" style="left:99px;top:1px;width:32px;text-align:center;font-size:17px;font-weight:bold;line-height:28px;color:#484848">?</div>
<svg style="left:140px" viewBox="0 0 16 16"><path d="M1.600 13.200a7.300 7.300 0 1 1 12.800 0" fill="none" stroke="#ff3b30" stroke-width="1"/><path d="M1 14h14" stroke="#ff3b30" stroke-width="1"/><path d="M7.600 10.200l4-3.700" stroke="#ff3b30" stroke-width="1.300"/><circle cx="7.800" cy="10.200" r="1" fill="#ff3b30"/></svg>
<svg style="left:173px" viewBox="0 0 16 16"><g stroke="#3a4bc0" fill="none"><path d="M8 1.200v13.600M2.100 4.600l11.800 6.800M13.900 4.600L2.100 11.400" stroke-width="1.300"/><path d="M6.300 2.300L8 4l1.700-1.700M6.300 13.700L8 12l1.700 1.700M1.900 7l2.400-.600-.700-2.400M14.100 7l-2.400-.600.700-2.400M1.900 9l2.400.600-.700 2.400M14.100 9l-2.400.600.700 2.400" stroke-width="1.100"/></g><circle cx="8" cy="8" r="1.300" fill="#3a4bc0"/></svg>
<svg style="left:206px" viewBox="0 0 16 16"><path d="M0.500 9.500h3.300l2-7.500 2.400 12 1.700-6.500 1.200 2h4.200" fill="none" stroke="#ff3b30" stroke-width="1" stroke-linejoin="round"/></svg>
</div>
<div class="tab" style="left:30px">全部</div><div class="tab" style="left:125px">A3</div><div class="tab" style="left:220px">A2</div><div class="tab" style="left:315px">A1</div>
<div id="tbl"><div class="tr g th" style="top:0;height:40px;line-height:40px"><div class="ck" style="top:6px"></div><span style="left:53px">ID</span><span style="left:88px">仓库</span><i class="sort" style="left:126px"></i><span style="left:208px">产品编号</span><i class="sort" style="left:274px"></i><span style="left:438px">产品名称</span><i class="sort" style="left:504px"></i><span style="left:558px">产品分类</span><i class="sort" style="left:624px"></i><span style="left:678px">产品规格</span><i class="sort" style="left:744px"></i><span style="left:798px">计量单位</span><i class="sort" style="left:864px"></i><span style="left:918px">数量</span><i class="sort" style="left:960px"></i><span style="left:1155px">操作</span></div><div class="tr g sel" style="top:40px"><div class="ck"></div><span style="left:56px">1</span><span style="left:88px">A2</span><span style="left:208px">公主裙 CP-20240410-003</span><span style="left:438px">公主裙</span><span style="left:558px">服饰</span><span style="left:678px">1</span><span style="left:798px">件</span><span style="left:918px">50</span><span class="op" style="left:1159px">查看</span></div><div class="tr" style="top:78px"><div class="ck"></div><span style="left:56px">2</span><span style="left:88px">A3</span><span style="left:208px">笔记本 CP-20240410-002</span><span style="left:438px">笔记本</span><span style="left:558px">书籍</span><span style="left:678px">1</span><span style="left:798px">本</span><span style="left:918px">10</span><span class="op" style="left:1159px">查看</span></div><div class="tr g" style="top:116px"><div class="ck"></div><span style="left:56px">3</span><span style="left:88px">A3</span><span style="left:208px">手套 CP-20240410-006</span><span style="left:438px">手套</span><span style="left:558px">日常用品</span><span style="left:678px">s</span><span style="left:798px">件</span><span style="left:918px">20</span><span class="op" style="left:1159px">查看</span></div><div class="tr" style="top:154px"><div class="ck"></div><span style="left:56px">4</span><span style="left:88px">A1</span><span style="left:208px">手套 CP-20240410-006</span><span style="left:438px">手套</span><span style="left:558px">日常用品</span><span style="left:678px">s</span><span style="left:798px">件</span><span style="left:918px">40</span><span class="op" style="left:1159px">查看</span></div><div class="tr g" style="top:192px"><div class="ck"></div><span style="left:56px">5</span><span style="left:88px">A1</span><span style="left:208px">笔记本 CP-20240410-002</span><span style="left:438px">笔记本</span><span style="left:558px">书籍</span><span style="left:678px">1</span><span style="left:798px">本</span><span style="left:918px">37</span><span class="op" style="left:1159px">查看</span></div><div class="tr g" style="top:230px;height:28px;line-height:30px;background:#f8f8f8"><span style="left:918px">461.00</span></div><div class="abs" style="left:41px;top:0;width:5px;height:230px;background:linear-gradient(90deg,rgba(0,0,0,.06),rgba(0,0,0,0))"></div><div class="abs" style="left:0;top:258px;width:1388px;height:1px;background:#eee"></div><svg class="abs" style="left:20px;top:273px" width="10" height="14" viewBox="0 0 10 14"><path d="M8 1L2 7l6 6" fill="none" stroke="#d2d2d2" stroke-width="1.200"/></svg>
<div class="pg" style="left:44px;width:31px;background:#3846ae;color:#fff;text-align:center;border-radius:2px;font-weight:bold">1</div>
<svg class="abs" style="left:89px;top:273px" width="10" height="14" viewBox="0 0 10 14"><path d="M2 1l6 6-6 6" fill="none" stroke="#d2d2d2" stroke-width="1.200"/></svg>
<div class="pg" style="left:113px;color:#aaa">到第</div>
<div class="pg" style="left:147px;width:40px;border:1px solid #eee;border-radius:2px;text-align:center;line-height:24px">1</div>
<div class="pg" style="left:197px;color:#aaa">页</div>
<div class="pg" style="left:219px;width:46px;border:1px solid #eee;border-radius:2px;text-align:center;line-height:24px">确定</div>
<div class="pg" style="left:274px">共 13 条</div>
<div class="pg" style="left:329px;width:79px;border:1px solid #eee;border-radius:2px;line-height:24px;padding-left:7px">16 条/页<svg class="abs" style="left:62px;top:9px" width="10" height="7" viewBox="0 0 10 7"><path d="M1 1l4 4 4-4" fill="none" stroke="#000" stroke-width="1.800"/></svg></div></div>
<div class="abs" style="left:30px;top:81px;width:65px;height:2px;background:#3846ae"></div>
</div>
</div>
<div id="wmk"><div class="wm" style="left:51.5px;top:45px">id:12025-12-26六蚁</div><div class="wm" style="left:383.5px;top:45px">id:12025-12-26六蚁</div><div class="wm" style="left:715.5px;top:45px">id:12025-12-26六蚁</div><div class="wm" style="left:1047.5px;top:45px">id:12025-12-26六蚁</div><div class="wm" style="left:1379.5px;top:45px">id:12025-12-26六蚁</div><div class="wm" style="left:1711.5px;top:45px">id:12025-12-26六蚁</div><div class="wm" style="left:51.5px;top:175px">id:12025-12-26六蚁</div><div class="wm" style="left:383.5px;top:175px">id:12025-12-26六蚁</div><div class="wm" style="left:715.5px;top:175px">id:12025-12-26六蚁</div><div class="wm" style="left:1047.5px;top:175px">id:12025-12-26六蚁</div><div class="wm" style="left:1379.5px;top:175px">id:12025-12-26六蚁</div><div class="wm" style="left:1711.5px;top:175px">id:12025-12-26六蚁</div><div class="wm" style="left:51.5px;top:305px">id:12025-12-26六蚁</div><div class="wm" style="left:383.5px;top:305px">id:12025-12-26六蚁</div><div class="wm" style="left:715.5px;top:305px">id:12025-12-26六蚁</div><div class="wm" style="left:1047.5px;top:305px">id:12025-12-26六蚁</div><div class="wm" style="left:1379.5px;top:305px">id:12025-12-26六蚁</div><div class="wm" style="left:1711.5px;top:305px">id:12025-12-26六蚁</div><div class="wm" style="left:51.5px;top:435px">id:12025-12-26六蚁</div><div class="wm" style="left:383.5px;top:435px">id:12025-12-26六蚁</div><div class="wm" style="left:715.5px;top:435px">id:12025-12-26六蚁</div><div class="wm" style="left:1047.5px;top:435px">id:12025-12-26六蚁</div><div class="wm" style="left:1379.5px;top:435px">id:12025-12-26六蚁</div><div class="wm" style="left:1711.5px;top:435px">id:12025-12-26六蚁</div><div class="wm" style="left:51.5px;top:565px">id:12025-12-26六蚁</div><div class="wm" style="left:383.5px;top:565px">id:12025-12-26六蚁</div><div class="wm" style="left:715.5px;top:565px">id:12025-12-26六蚁</div><div class="wm" style="left:1047.5px;top:565px">id:12025-12-26六蚁</div><div class="wm" style="left:1379.5px;top:565px">id:12025-12-26六蚁</div><div class="wm" style="left:1711.5px;top:565px">id:12025-12-26六蚁</div></div>
<div id="foot">六蚁仓管 V2.0.1 [当前系统版本：8.0.8]</div>
</body>
</html>
